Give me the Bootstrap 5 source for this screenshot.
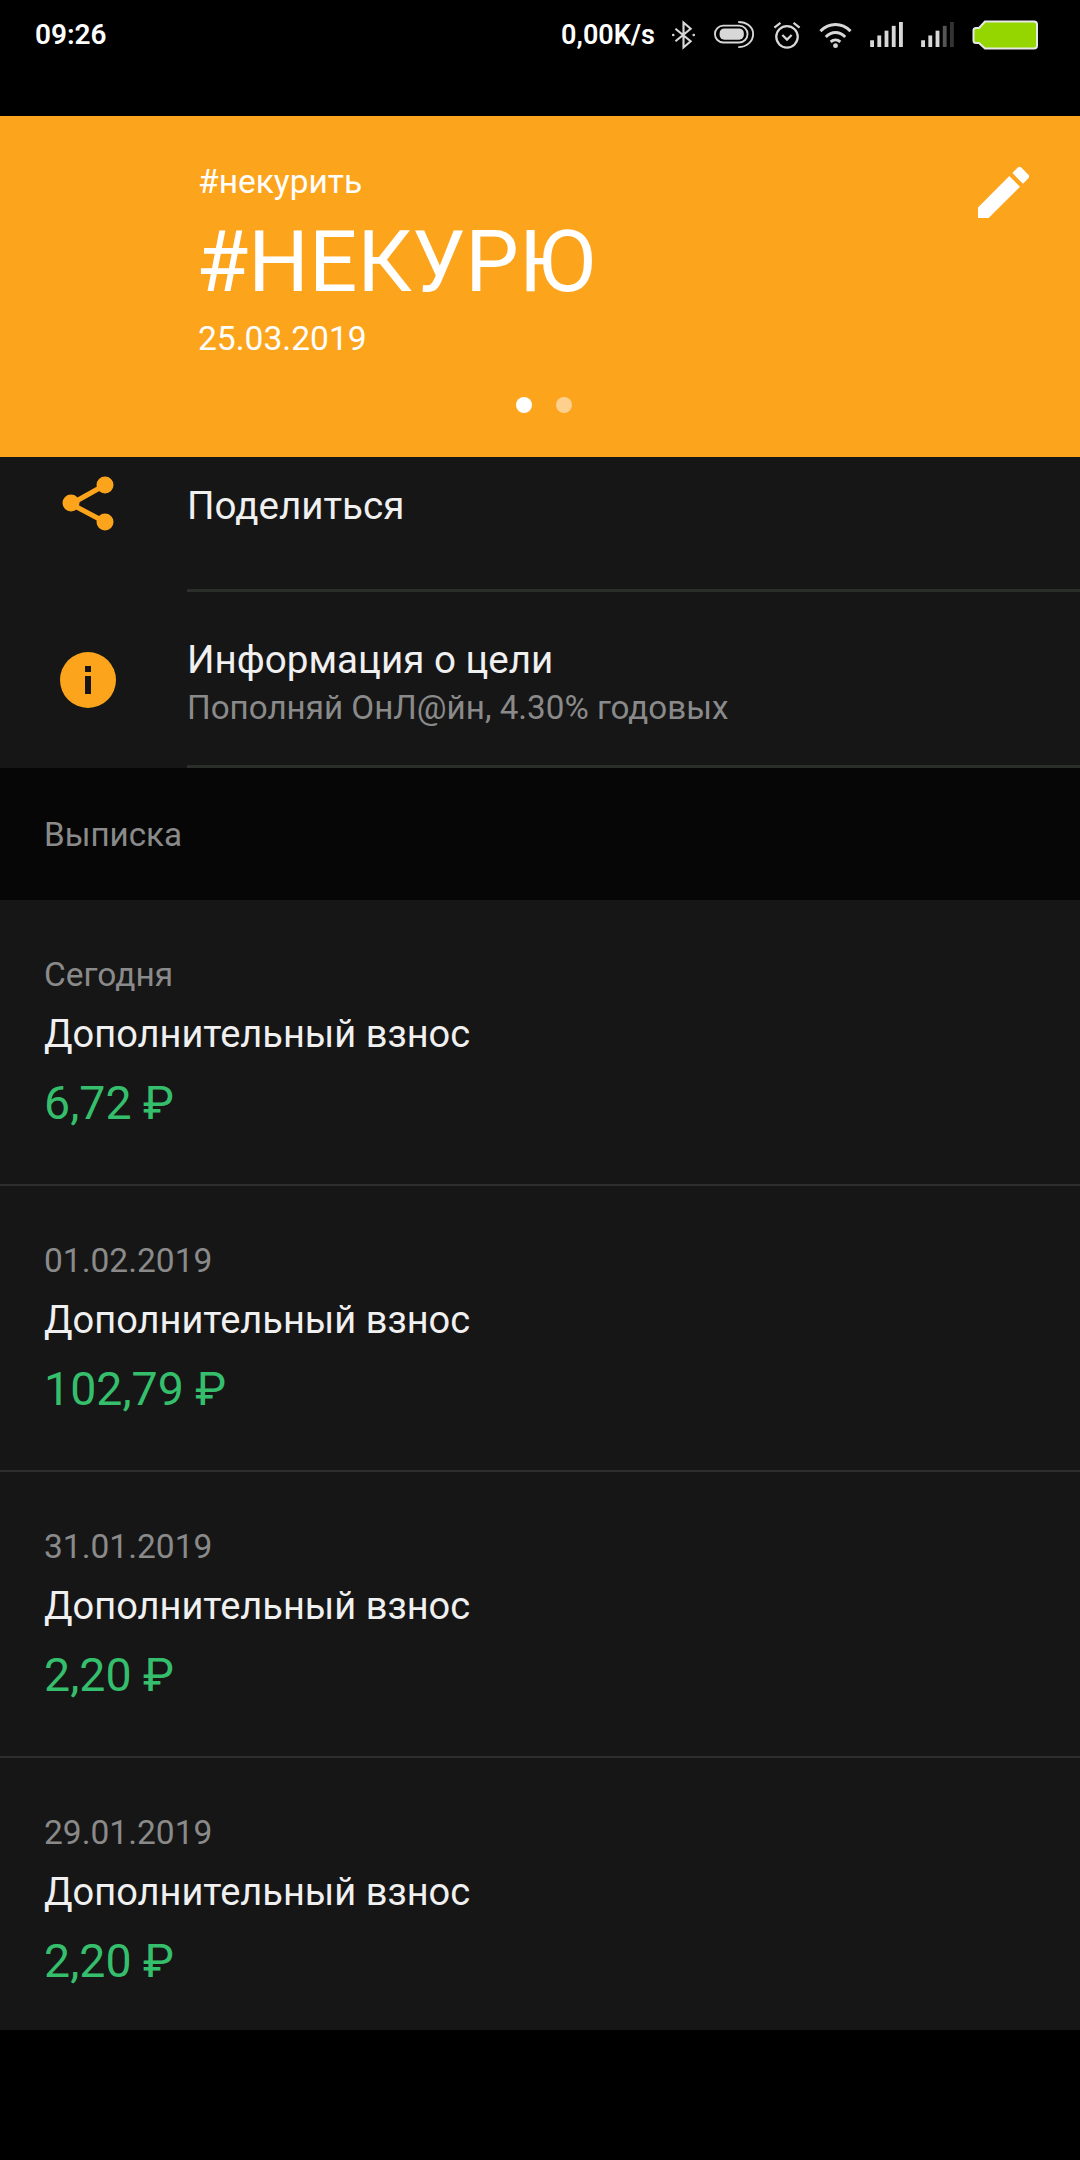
<!DOCTYPE html>
<html lang="ru">
<head>
  <meta charset="UTF-8" />
  <title>#НЕКУРЮ</title>
  <meta name="viewport" content="width=device-width, initial-scale=1.0" />
  <link href="https://cdn.jsdelivr.net/npm/bootstrap@5.3.0/dist/css/bootstrap.min.css" rel="stylesheet">
  <style>
    body { background-color: #000; font-family: Roboto, "Noto Sans", sans-serif; width: 1080px; height: 2160px; overflow: hidden; }
    .status-bar { height: 116px; padding: 0 42px 47px 35px; color: #fff; }
    .status-time { font-size: 28px; font-weight: 600; line-height: 30px; }
    .status-speed { font-size: 27px; font-weight: 600; line-height: 30px; margin-right: -2px; }
    .status-icons { gap: 18px; }
    .goal-header { height: 341px; background-color: #fca41c; color: #fff; padding: 46px 0 0 198px; }
    .goal-tag { font-size: 33.5px; line-height: 40px; }
    .goal-title { font-size: 85px; line-height: 100px; margin: 10px 0 0 -2px; }
    .goal-date { font-size: 33.6px; line-height: 40px; margin-top: 7px; }
    .edit-btn { position: absolute; top: 51px; right: 51px; }
    .pager { position: absolute; top: 281px; left: 516px; gap: 24px; }
    .pager-dot { width: 16px; height: 16px; border-radius: 50%; background: #fff; }
    .pager-dot.dim { background: #fed08e; }
    .action-list { background-color: #161616; }
    .action-row { height: 135px; }
    .action-row.tall { height: 176px; }
    .action-icon { width: 187px; flex-shrink: 0; padding-right: 12px; }
    .share-ico { margin-top: 18px; }
    .action-body { border-bottom: 3px solid #2c2e2c; padding-top: 27px; }
    .action-body.info-body { padding-top: 46px; }
    .action-title { font-size: 38.6px; line-height: 44px; color: #f0f0f0; }
    .action-sub { font-size: 33.2px; line-height: 40px; color: #8a8a8a; margin-top: 6px; }
    .section-band { height: 132px; background-color: #060606; padding: 48px 44px 0; font-size: 33.2px; line-height: 38px; color: #8a8a8a; }
    .statement-row { background-color: #161616; height: 286px; padding: 56px 44px 0; border-bottom: 2px solid #2e2e2e; }
    .statement-row:last-child { height: 272px; border-bottom: 0; }
    .row-date { font-size: 33.5px; line-height: 38px; color: #8a8a8a; }
    .row-title { font-size: 38px; line-height: 44px; color: #f0f0f0; margin-top: 18px; }
    .row-amount { font-size: 46.5px; line-height: 56px; color: #35bf6c; margin-top: 19px; }
  </style>
</head>
<body>
<div class="status-bar d-flex align-items-center justify-content-between">
  <div class="status-time">09:26</div>
  <div class="status-icons d-flex align-items-center">
    <div class="status-speed">0,00K/s</div>
    <svg width="25" height="30" viewBox="0 0 28 30" fill="none" stroke="#d8d8d8" stroke-width="2.4"><path d="M5 8l17 14-8 7V1l8 7L5 22"/><circle cx="2.5" cy="15" r="1.5" fill="#d8d8d8" stroke="none"/><circle cx="25.5" cy="15" r="1.5" fill="#d8d8d8" stroke="none"/></svg>
    <svg width="41" height="30" viewBox="0 0 44 30" fill="none" stroke="#d8d8d8" stroke-width="2"><rect x="1" y="5" width="35" height="18" rx="9"/><rect x="6" y="8" width="26" height="12" rx="5" fill="#d8d8d8" stroke="none"/><path d="M26 1c9 0 16 5 16 13s-7 14-16 14"/></svg>
    <svg width="28" height="30" viewBox="0 0 30 30" fill="none" stroke="#d8d8d8" stroke-width="2.4"><circle cx="15" cy="17" r="11.5"/><path d="M10 15l5 5 5-5"/><path d="M1.500 7 8 2M28.500 7 22 2"/></svg>
    <svg width="33" height="28" viewBox="0 0 34 28" fill="none" stroke="#d8d8d8" stroke-width="3"><path d="M1.500 10c9-9 22-9 31 0"/><path d="M7 16c6-6 14-6 20 0"/><path d="M12 21c3-2.500 7-2.500 10 0"/><circle cx="17" cy="25" r="2.500" fill="#d8d8d8" stroke="none"/></svg>
    <svg width="33" height="25" viewBox="0 0 34 26"><g fill="#d8d8d8"><rect x="0" y="19" width="4" height="7"/><rect x="7.500" y="14" width="4" height="12"/><rect x="15" y="9" width="4" height="17"/><rect x="22.500" y="4" width="4" height="22"/><rect x="30" y="0" width="4" height="26"/></g></svg>
    <svg width="33" height="25" viewBox="0 0 34 26"><g fill="#d8d8d8"><rect x="0" y="19" width="4" height="7"/><rect x="7.500" y="14" width="4" height="12"/><rect x="15" y="9" width="4" height="17"/></g><rect x="22.500" y="4" width="4" height="22" fill="#555"/><rect x="30" y="0" width="4" height="26" fill="#333"/></svg>
    <svg width="66" height="30" viewBox="0 0 66 30"><path d="M13 1.500h49a3 3 0 0 1 3 3v21a3 3 0 0 1-3 3H13L7 23H4a2.500 2.500 0 0 1-2.500-2.500v-10A2.500 2.500 0 0 1 4 8h3z" fill="#95d600" stroke="#e8e8e8" stroke-width="2"/></svg>
  </div>
</div>

<div class="goal-header position-relative">
  <div class="goal-tag">#некурить</div>
  <div class="goal-title">#НЕКУРЮ</div>
  <div class="goal-date">25.03.2019</div>
  <svg class="edit-btn" width="51" height="51" viewBox="3 3 18 18" fill="#fff"><path d="M3 17.250V21h3.750L17.810 9.940l-3.750-3.750L3 17.250zM20.710 7.040a1 1 0 0 0 0-1.410l-2.340-2.340a1 1 0 0 0-1.410 0l-1.830 1.830 3.750 3.750 1.830-1.830z"/></svg>
  <div class="pager d-flex">
    <div class="pager-dot"></div>
    <div class="pager-dot dim"></div>
  </div>
</div>

<div class="action-list">
  <div class="action-row d-flex">
    <div class="action-icon d-flex justify-content-center">
      <svg class="share-ico" width="54" height="56" viewBox="0 0 54 56" fill="#fca41c" stroke="#fca41c" stroke-width="5"><path d="M44 10 10 29l34 18" fill="none"/><circle cx="44" cy="10" r="6"/><circle cx="10" cy="28" r="6"/><circle cx="44" cy="47" r="6"/></svg>
    </div>
    <div class="action-body flex-grow-1">
      <div class="action-title">Поделиться</div>
    </div>
  </div>
  <div class="action-row tall d-flex">
    <div class="action-icon d-flex justify-content-center align-items-center">
      <svg width="56" height="56" viewBox="0 0 56 56"><circle cx="28" cy="28" r="28" fill="#fca41c"/><rect x="25" y="14" width="6" height="6" fill="#161616"/><rect x="25" y="24" width="6" height="18" fill="#161616"/></svg>
    </div>
    <div class="action-body info-body flex-grow-1">
      <div class="action-title">Информация о цели</div>
      <div class="action-sub">Пополняй ОнЛ@йн, 4.30% годовых</div>
    </div>
  </div>
</div>

<div class="section-band">Выписка</div>

<div class="statement">
  <div class="statement-row">
    <div class="row-date">Сегодня</div>
    <div class="row-title">Дополнительный взнос</div>
    <div class="row-amount">6,72 ₽</div>
  </div>
  <div class="statement-row">
    <div class="row-date">01.02.2019</div>
    <div class="row-title">Дополнительный взнос</div>
    <div class="row-amount">102,79 ₽</div>
  </div>
  <div class="statement-row">
    <div class="row-date">31.01.2019</div>
    <div class="row-title">Дополнительный взнос</div>
    <div class="row-amount">2,20 ₽</div>
  </div>
  <div class="statement-row">
    <div class="row-date">29.01.2019</div>
    <div class="row-title">Дополнительный взнос</div>
    <div class="row-amount">2,20 ₽</div>
  </div>
</div>
<script src="https://cdn.jsdelivr.net/npm/bootstrap@5.3.0/dist/js/bootstrap.bundle.min.js"></script>
</body>
</html>
